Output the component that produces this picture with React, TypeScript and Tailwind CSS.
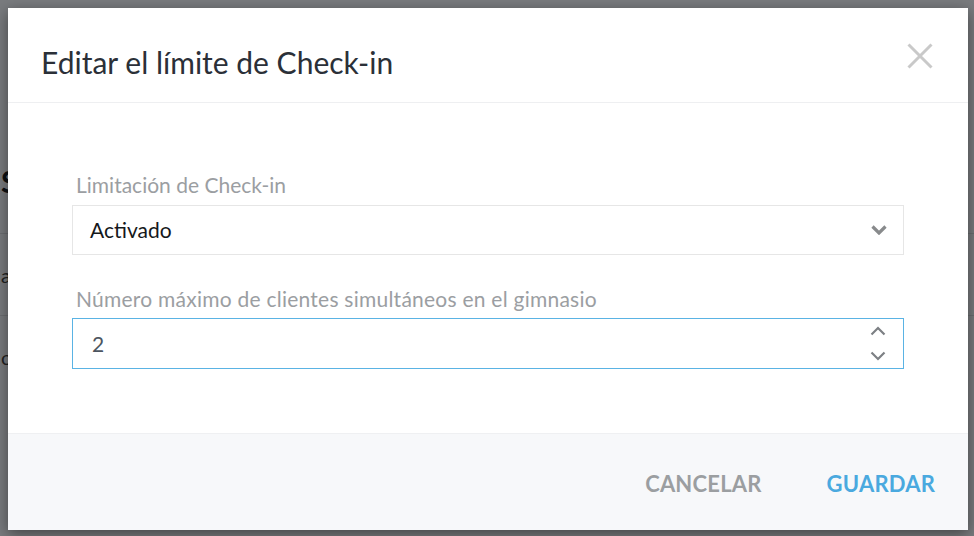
import React from 'react';

const Chevron = ({ dir = 'down', className = '', stroke = 3 }: { dir?: 'up' | 'down'; className?: string; stroke?: number }) => (
  <svg viewBox="0 0 16 10" className={className} fill="none" stroke="currentColor" strokeWidth={stroke} strokeLinecap="butt">
    {dir === 'down' ? <path d="M1.5 1.5 L8 8 L14.5 1.5" /> : <path d="M1.5 8.5 L8 2 L14.5 8.5" />}
  </svg>
);

const CloseIcon = () => (
  <svg viewBox="0 0 26 26" className="w-[26px] h-[26px] text-[#c9c9c9]" fill="none" stroke="currentColor" strokeWidth={3}>
    <path d="M1.5 1.5 L24.5 24.5 M24.5 1.5 L1.5 24.5" />
  </svg>
);

const App = () => {
  return (
    <div className="relative w-[974px] h-[536px] overflow-hidden bg-[#f3f7fc] font-['Lato',sans-serif]">
      {/* page behind the backdrop */}
      <div className="flex flex-col pt-[166px]">
        <div className="h-[68px] border-b border-[#d8dde3] flex items-start">
          <span className="pl-[1px] text-[30px] font-bold text-[#1d2228] leading-none">S</span>
        </div>
        <div className="h-[82px] border-b border-[#d8dde3] flex items-center">
          <span className="pl-[1px] text-[20px] text-[#444]">a</span>
        </div>
        <div className="h-[82px] flex items-center">
          <span className="pl-[1px] text-[20px] text-[#444]">c</span>
        </div>
      </div>

      {/* backdrop */}
      <div className="absolute inset-0 bg-[#000]/50" />

      {/* modal */}
      <div className="absolute left-[8px] top-[8px] w-[960px] h-[522px] bg-white flex flex-col shadow-[0_4px_14px_rgba(0,0,0,0.45)]">
        <div className="h-[95px] shrink-0 border-b border-[#eeeff1] flex items-center justify-between pl-[33px] pr-[35px]">
          <h1 className="text-[30px] text-[#2b3038] pt-[14px]">Editar el límite de Check-in</h1>
          <button className="pt-[2px]">
            <CloseIcon />
          </button>
        </div>

        <div className="flex-1 px-[64px] pt-[69px]">
          <label className="block pl-[4px] text-[21px] leading-[26px] text-[#9b9ea2]">Limitación de Check-in</label>
          <div className="mt-[7px] h-[50px] border border-[#e6e6e6] flex items-center justify-between pl-[17px] pr-[16px]">
            <span className="text-[21px] text-[#15181b]">Activado</span>
            <Chevron className="w-[16px] h-[10px] text-[#888a8c]" stroke={3.2} />
          </div>

          <label className="block mt-[31px] pl-[4px] text-[21px] leading-[26px] tracking-[0.24px] text-[#9b9ea2]">
            Número máximo de clientes simultáneos en el gimnasio
          </label>
          <div className="mt-[6px] h-[51px] border border-[#5ab3e4] flex items-center justify-between pl-[19px] pr-[17px]">
            <span className="text-[21px] text-[#4c5560]">2</span>
            <div className="flex flex-col gap-[15px]">
              <Chevron dir="up" className="w-[16px] h-[10px] text-[#7d8084]" stroke={2.2} />
              <Chevron dir="down" className="w-[16px] h-[10px] text-[#7d8084]" stroke={2.2} />
            </div>
          </div>
        </div>

        <div className="h-[97px] shrink-0 bg-[#f7f8fa] border-t border-[#eff0f2] flex items-center justify-end gap-[65px] pr-[33px] pt-[2px]">
          <button className="text-[22px] font-bold tracking-[0.2px] text-[#9b9ea1]">CANCELAR</button>
          <button className="text-[22px] font-bold tracking-[0.2px] text-[#4aa9df]">GUARDAR</button>
        </div>
      </div>
    </div>
  );
};

export default App;
